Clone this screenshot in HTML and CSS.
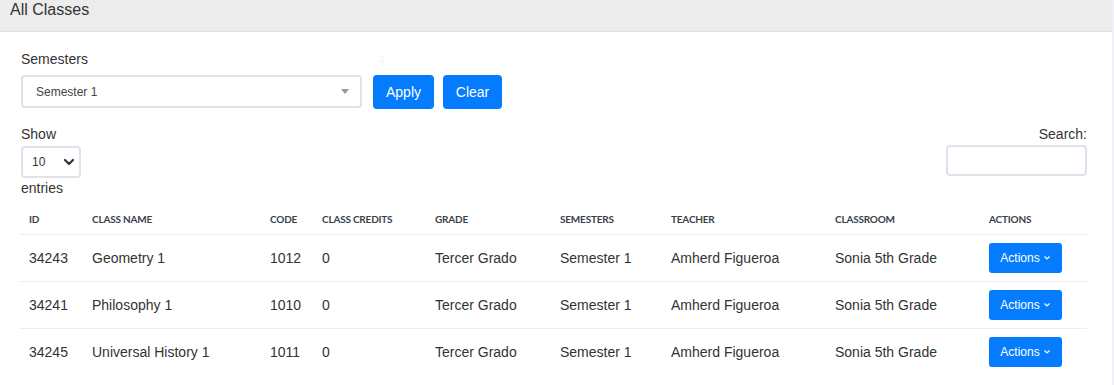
FILE: index.html
```html
<!DOCTYPE html>
<html>
<head>
<meta charset="utf-8">
<link rel="stylesheet" href="styles.css">
</head>
<body>
<div class="page">
  <div class="topbar">All Classes</div>
  <div class="content">
    <div class="filter">
      <div class="filter-label-row"><span class="label">Semesters</span><span class="ghost">a</span></div>
      <div class="filter-row">
        <div class="select2"><span>Semester 1</span><span class="caret"></span></div>
        <button class="btn">Apply</button>
        <button class="btn">Clear</button>
      </div>
    </div>
    <div class="dt-top">
      <div class="length">
        <div class="txt">Show</div>
        <div class="len-select"><span>10</span><svg width="12" height="8" viewBox="0 0 12 8"><path d="M2 2l4 4 4-4" fill="none" stroke="#333" stroke-width="2.2" stroke-linecap="round" stroke-linejoin="round"/></svg></div>
        <div class="txt">entries</div>
      </div>
      <div class="search">
        <div class="txt">Search:</div>
        <div class="search-input"></div>
      </div>
    </div>
    <table class="tbl">
      <colgroup>
        <col class="c1"><col class="c2"><col class="c3"><col class="c4"><col class="c5"><col class="c6"><col class="c7"><col class="c8"><col class="c9">
      </colgroup>
      <thead>
        <tr><th>ID</th><th>Class Name</th><th>Code</th><th>Class Credits</th><th>Grade</th><th>Semesters</th><th>Teacher</th><th>Classroom</th><th>Actions</th></tr>
      </thead>
      <tbody>
        <tr><td>34243</td><td>Geometry 1</td><td>1012</td><td>0</td><td>Tercer Grado</td><td>Semester 1</td><td>Amherd Figueroa</td><td>Sonia 5th Grade</td><td><button class="act">Actions<svg width="8" height="6" viewBox="0 0 8 6"><path d="M1.5 1.5l2.5 2.5 2.5-2.5" fill="none" stroke="#fff" stroke-width="1.2"/></svg></button></td></tr>
        <tr><td>34241</td><td>Philosophy 1</td><td>1010</td><td>0</td><td>Tercer Grado</td><td>Semester 1</td><td>Amherd Figueroa</td><td>Sonia 5th Grade</td><td><button class="act">Actions<svg width="8" height="6" viewBox="0 0 8 6"><path d="M1.5 1.5l2.5 2.5 2.5-2.5" fill="none" stroke="#fff" stroke-width="1.2"/></svg></button></td></tr>
        <tr><td>34245</td><td>Universal History 1</td><td>1011</td><td>0</td><td>Tercer Grado</td><td>Semester 1</td><td>Amherd Figueroa</td><td>Sonia 5th Grade</td><td><button class="act">Actions<svg width="8" height="6" viewBox="0 0 8 6"><path d="M1.5 1.5l2.5 2.5 2.5-2.5" fill="none" stroke="#fff" stroke-width="1.2"/></svg></button></td></tr>
      </tbody>
    </table>
  </div>
</div>
</body>
</html>
```
FILE: styles.css
```css
* { box-sizing: border-box; }
html, body { margin: 0; padding: 0; }
body {
  background: #eef0f6;
  font-family: "Liberation Sans", Arial, sans-serif;
  color: #333;
  font-size: 14px;
  overflow: hidden;
}
.page {
  width: 1112px;
  background: #fff;
  min-height: 385px;
}
.topbar {
  height: 32px;
  background: #ececec;
  border-bottom: 1px solid #dedede;
  padding: 0 10px;
  font-size: 16px;
  line-height: 20px;
  color: #333;
}
.content {
  padding: 17px 25px 0 20px;
}
.filter-label-row {
  display: flex;
  height: 20px;
  line-height: 20px;
}
.label { padding-left: 1px; }
.ghost {
  margin-left: 290px;
  color: #eef5ff;
  font-size: 12px;
}
.filter-row {
  display: flex;
  margin-top: 6px;
  padding-left: 1px;
}
.select2 {
  width: 341px;
  height: 33px;
  border: 2px solid #dfe2ec;
  border-radius: 4px;
  display: flex;
  align-items: center;
  justify-content: space-between;
  padding: 0 11px 0 13px;
  margin-right: 11px;
  font-size: 12px;
  color: #444;
}
.caret {
  width: 0; height: 0;
  border-left: 4px solid transparent;
  border-right: 4px solid transparent;
  border-top: 5px solid #999;
}
.btn {
  height: 34px;
  padding: 0;
  background: #057cfd;
  color: #fff;
  border: none;
  border-radius: 4px;
  font-family: "Liberation Sans", Arial, sans-serif;
  font-size: 14px;
  line-height: 34px;
  width: 61px;
}
.btn + .btn { margin-left: 9px; width: 59px; }
.dt-top {
  display: flex;
  justify-content: space-between;
  margin-top: 15px;
}
.txt { line-height: 20px; height: 20px; }
.length { padding-left: 1px; }
.len-select {
  width: 60px;
  height: 32px;
  border: 2px solid #dfe2ec;
  border-radius: 4px;
  margin-top: 2px;
  display: flex;
  align-items: center;
  justify-content: space-between;
  padding: 0 4px 0 9px;
  font-size: 12px;
}
.search { text-align: right; }
.search-input {
  width: 141px;
  height: 31px;
  margin-top: 1px;
  border: 2px solid #dfe2ec;
  border-radius: 4px;
}
.tbl {
  width: 1067px;
  border-collapse: collapse;
  margin-top: 7px;
  table-layout: fixed;
}
.c1 { width: 63px; } .c2 { width: 178px; } .c3 { width: 52px; } .c4 { width: 113px; }
.c5 { width: 125px; } .c6 { width: 111px; } .c7 { width: 164px; } .c8 { width: 154px; } .c9 { width: 107px; }
.tbl th {
  font-family: Lato, "Liberation Sans", sans-serif;
  font-weight: 700;
  font-size: 10px;
  text-transform: uppercase;
  color: #3a3f4c;
  text-align: left;
  padding: 0 0 0 9px;
  height: 29px;
  vertical-align: middle;
  border-bottom: 1px solid #eceef2;
  letter-spacing: -0.2px;
}
.tbl td {
  padding: 0 0 0 9px;
  height: 47px;
  vertical-align: middle;
  border-bottom: 1px solid #eceef2;
  font-size: 14px;
  color: #333;
  white-space: nowrap;
}
.tbl tr:last-child td { border-bottom: none; }
.act {
  width: 73px;
  height: 30px;
  background: #057cfd;
  color: #fff;
  border: none;
  border-radius: 3px;
  font-family: "Liberation Sans", Arial, sans-serif;
  font-size: 12px;
  display: flex;
  align-items: center;
  justify-content: center;
  gap: 3px;
  padding: 0;
}
```
